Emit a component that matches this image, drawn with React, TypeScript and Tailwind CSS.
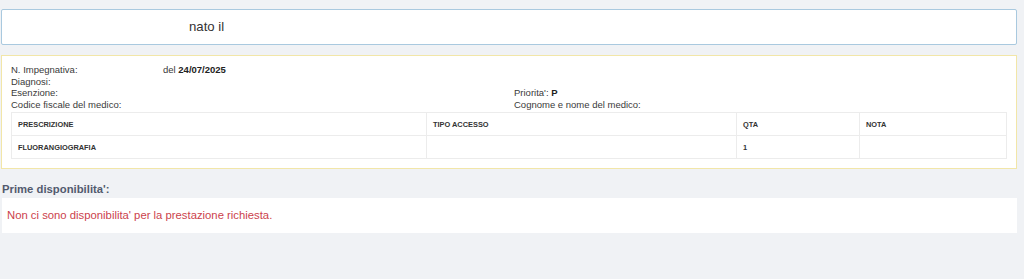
export default function App() {
  const cols = [
    { label: "PRESCRIZIONE", value: "FLUORANGIOGRAFIA", w: "w-[414px]" },
    { label: "TIPO ACCESSO", value: "", w: "w-[310px]" },
    { label: "QTA", value: "1", w: "w-[123px]" },
    { label: "NOTA", value: "", w: "flex-1" },
  ];

  return (
    <div
      className="min-h-[279px] bg-[#f0f2f5] pt-[9px] pl-[1px] pr-[7px] text-[#333]"
      style={{ fontFamily: '"Liberation Sans", Arial, sans-serif' }}
    >
      {/* patient header */}
      <div className="flex h-[36px] items-center rounded-[2px] border border-[#a9c9df] bg-white pl-[187px] text-[13.2px]">
        nato il
      </div>

      {/* impegnativa */}
      <div className="mt-[10px] border border-[#f2e6a8] bg-white px-[9px] pt-[8px] pb-[9px] text-[9.5px] leading-[11.6px] text-[#3a3a3a]">
        <div className="grid grid-cols-[503px_1fr]">
          <div className="flex">
            <span className="w-[152px]">N. Impegnativa:</span>
            <span>
              del <b className="text-[#222]">24/07/2025</b>
            </span>
          </div>
          <div />
          <div>Diagnosi:</div>
          <div />
          <div>Esenzione:</div>
          <div>
            Priorita': <b className="text-[#222]">P</b>
          </div>
          <div>Codice fiscale del medico:</div>
          <div>Cognome e nome del medico:</div>
        </div>

        <div className="mt-[2px] border border-[#ececec] text-[7.4px] font-bold text-[#333]">
          <div className="flex h-[23px] border-b border-[#ececec]">
            {cols.map((c, i) => (
              <div
                key={c.label}
                className={`${c.w} flex items-center pl-[6px] ${i > 0 ? "border-l border-[#ececec]" : ""}`}
              >
                {c.label}
              </div>
            ))}
          </div>
          <div className="flex h-[22px]">
            {cols.map((c, i) => (
              <div
                key={c.label}
                className={`${c.w} flex items-center pl-[6px] ${i > 0 ? "border-l border-[#ececec]" : ""}`}
              >
                {c.value}
              </div>
            ))}
          </div>
        </div>
      </div>

      {/* disponibilita */}
      <div className="mt-[14px] pl-[1px] text-[11.3px] font-bold leading-[13px] text-[#525a6e]">
        Prime disponibilita':
      </div>
      <div className="mt-[2px] ml-[1px] flex h-[35px] items-center bg-white pl-[5px] text-[11.3px] text-[#cc3f4d]">
        Non ci sono disponibilita' per la prestazione richiesta.
      </div>
    </div>
  );
}
